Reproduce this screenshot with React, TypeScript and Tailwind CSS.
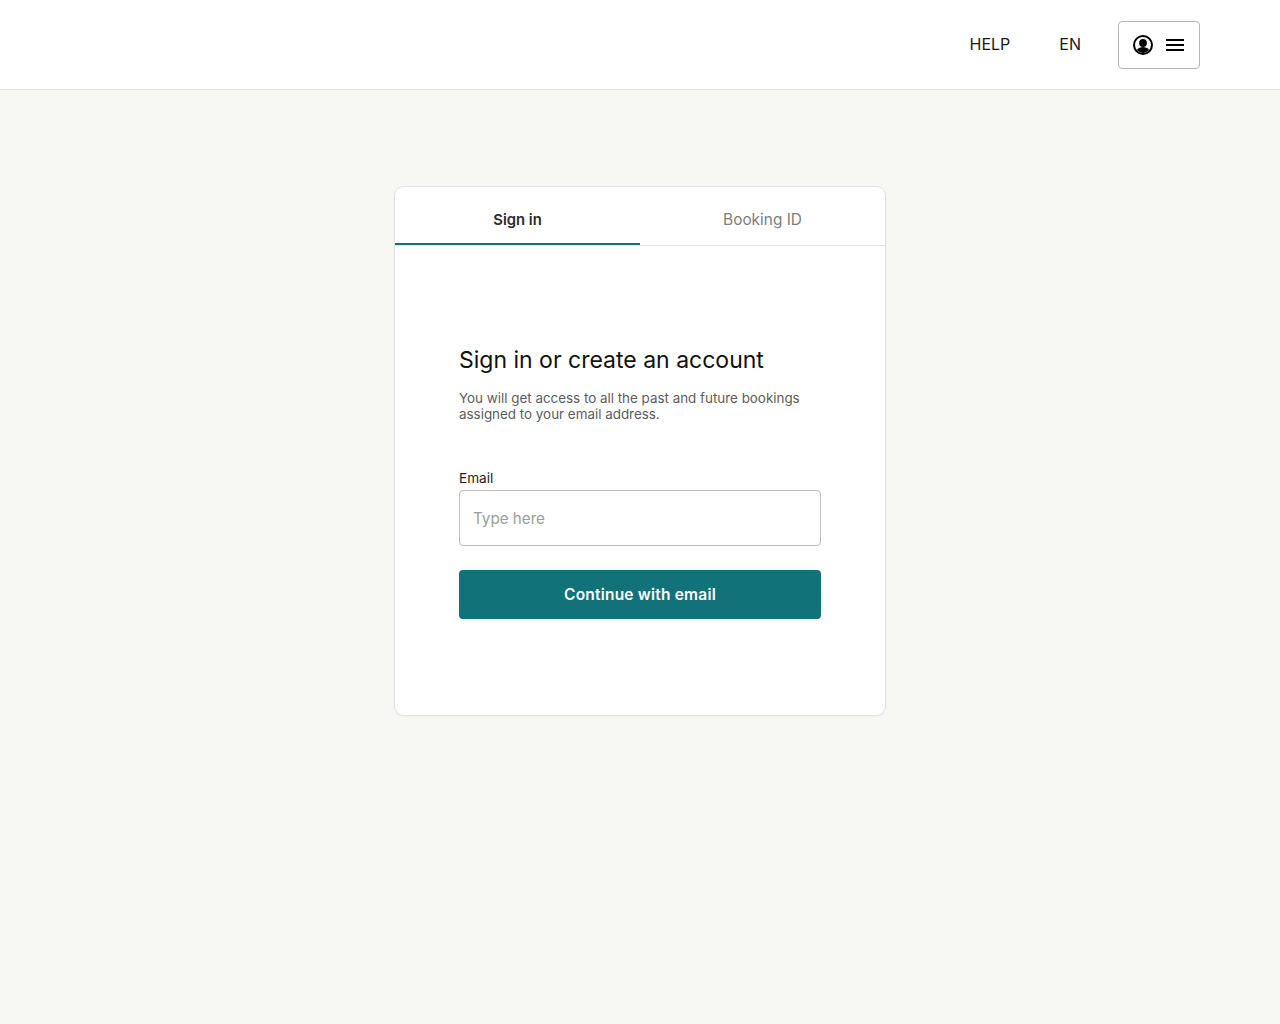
export default function App() {
  return (
    <div className="min-h-[1024px] bg-[#f7f7f3] font-['Inter','Liberation_Sans',sans-serif] text-[#111111]">
      <header className="h-[90px] bg-white border-b border-[#e2e2dc] flex items-center justify-end pr-[80px]">
        <a className="text-[16px] leading-6 pb-[2px] text-[#1a1a1a] mr-[49px]">HELP</a>
        <a className="text-[16px] leading-6 pb-[2px] text-[#1a1a1a] mr-[37px]">EN</a>
        <button className="w-[82px] h-[48px] bg-white border border-[#b5b5b5] rounded-[4px] flex items-center justify-start pl-[14px] gap-[13px]">
          <svg width="20" height="20" viewBox="0 0 20 20" aria-hidden="true">
            <defs>
              <clipPath id="c"><circle cx="10" cy="10" r="7.9" /></clipPath>
            </defs>
            <circle cx="10" cy="10" r="9" fill="none" stroke="#000" strokeWidth="2" />
            <g clipPath="url(#c)">
              <circle cx="10" cy="8" r="3.9" fill="#000" />
              <ellipse cx="10" cy="17.5" rx="7" ry="5.5" fill="#000" />
            </g>
          </svg>
          <svg width="18" height="12" viewBox="0 0 18 12" aria-hidden="true">
            <rect x="0" y="0" width="18" height="2" fill="#000" />
            <rect x="0" y="5" width="18" height="2" fill="#000" />
            <rect x="0" y="10" width="18" height="2" fill="#000" />
          </svg>
        </button>
      </header>
      <main className="flex justify-center pt-[96px]">
        <div className="w-[492px] h-[530px] bg-white border border-[#e2e2e0] rounded-[10px] overflow-hidden shadow-[0_1px_2px_rgba(0,0,0,0.04)]">
          <div className="flex h-[59px] border-b border-[#e3e3e3]">
            <div className="w-1/2 h-[58px] border-b-2 border-[#12727a] flex items-center justify-center pt-[11px] text-[14.8px] font-semibold text-[#2a2a2a]">
              Sign in
            </div>
            <div className="w-1/2 h-[58px] flex items-center justify-center pt-[8px] text-[15.4px] text-[#7d7d7d]">
              Booking ID
            </div>
          </div>
          <div className="px-[64px] pt-[99px]">
            <h1 className="text-[23px] leading-[30px] font-normal text-[#111111]">Sign in or create an account</h1>
            <p className="mt-[15px] text-[13.4px] leading-[16px] text-[#5c5c5c]">
              You will get access to all the past and future bookings assigned to your email address.
            </p>
            <label className="block mt-[48px] text-[13.6px] leading-[16px] text-[#222222]">Email</label>
            <input
              placeholder="Type here"
              className="block mt-[4px] w-full h-[56px] px-[13px] bg-white border border-[#bcbcbc] rounded-[4px] text-[15.2px] placeholder:text-[#9c9c9c] outline-none"
            />
            <button className="mt-[24px] w-full h-[49px] bg-[#12727a] rounded-[4px] text-[15.5px] tracking-[0.2px] font-semibold text-white">
              Continue with email
            </button>
          </div>
        </div>
      </main>
    </div>
  );
}
